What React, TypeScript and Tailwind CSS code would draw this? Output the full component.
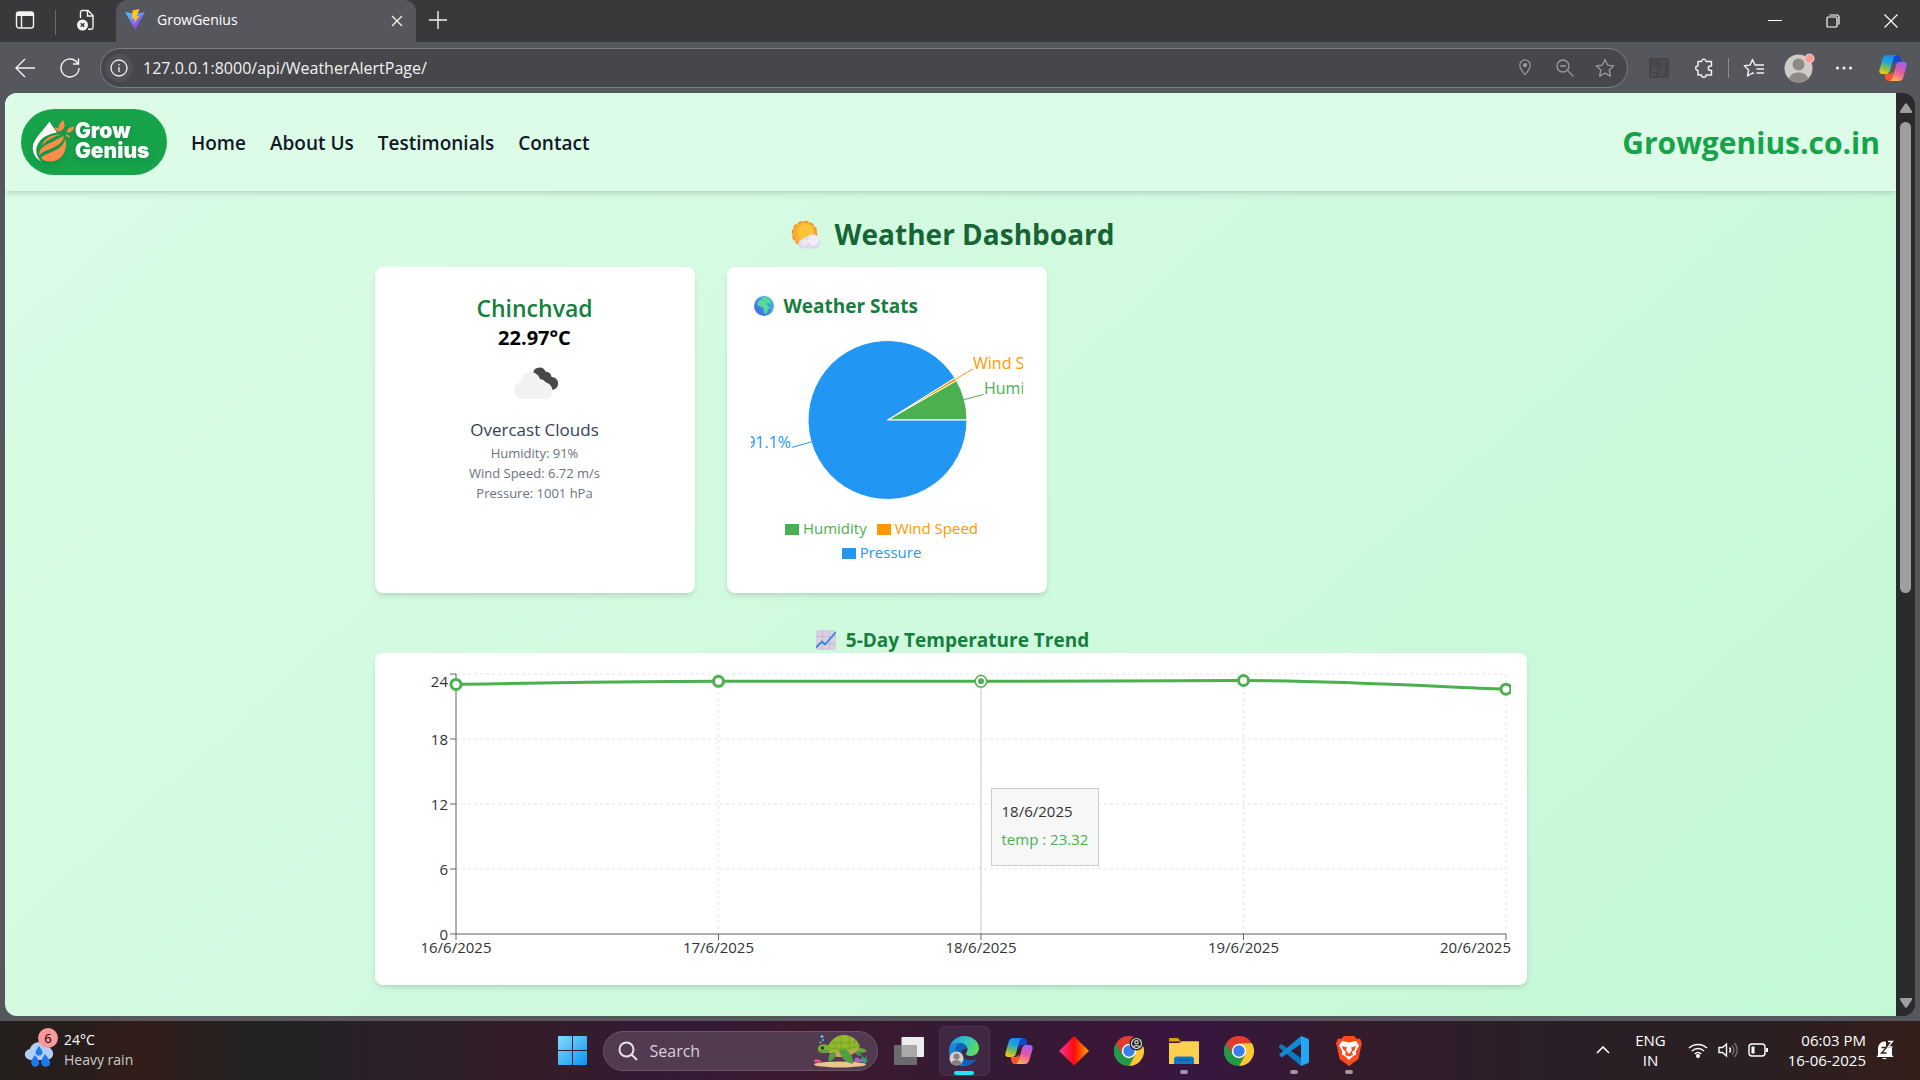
import React, { useId } from "react";
import type { ReactNode } from "react";

const days = [
  { date: "16/6/2025", temp: 23.04 },
  { date: "17/6/2025", temp: 23.32 },
  { date: "18/6/2025", temp: 23.32 },
  { date: "19/6/2025", temp: 23.4 },
  { date: "20/6/2025", temp: 22.6 },
];

/* ---------- shared pieces ---------- */

function IconButton({ label, className, children }: { label: string; className: string; children: ReactNode }) {
  return (
    <button type="button" aria-label={label} className={`flex shrink-0 items-center justify-center ${className}`}>
      {children}
    </button>
  );
}

function CopilotIcon() {
  const id = useId();
  return (
    <svg viewBox="0 0 28 28" className="size-7" aria-hidden="true">
      <defs>
        <linearGradient id={`${id}a`} x1="0.6" y1="0" x2="0.3" y2="1">
          <stop offset="0" stopColor="#1a8cf0" />
          <stop offset="0.4" stopColor="#22a5d8" />
          <stop offset="0.7" stopColor="#7fc04a" />
          <stop offset="1" stopColor="#f5c51a" />
        </linearGradient>
        <linearGradient id={`${id}b`} x1="0.7" y1="0" x2="0.3" y2="1">
          <stop offset="0" stopColor="#a55cf0" />
          <stop offset="0.5" stopColor="#ea5a9c" />
          <stop offset="1" stopColor="#fdb35a" />
        </linearGradient>
      </defs>
      <path d="M12 1h6.500c1.800 0 2.600 1.200 3 2.500l1.200 4.500h-4.500c-2 0-3 1-3.600 3z" fill="#1649c9" />
      <path d="M16 27H9.500c-1.700 0-2.500-1.200-3-2.800L5.500 20H10c2 0 3-1.200 3.600-3z" fill="#f4562f" />
      <path d="M8.500 1h9c-1.700.3-2.500 1.500-3 3.200L11 16.500C10.300 19 9.300 20 7 20H3C1 20 0 18.500.4 16.300L3.600 5C4.400 2.300 5.700 1 8.500 1z" fill={`url(#${id}a)`} />
      <path d="M19.500 27h-9c1.700-.3 2.500-1.500 3-3.200L17 11.500C17.700 9 18.700 8 21 8h4c2 0 3 1.500 2.600 3.700L24.400 23c-.8 2.700-2.100 4-4.900 4z" fill={`url(#${id}b)`} />
    </svg>
  );
}

function ChromeIcon({ profile = false }: { profile?: boolean }) {
  return (
    <svg viewBox="0 0 30 30" className="size-[30px]" aria-hidden="true">
      <path d="M15 15 2 7.500A15 15 0 0 1 28 7.500z" fill="#e33b2e" />
      <path d="M2 7.500A15 15 0 0 0 15 30l6.200-11.400L15 15 8.800 18.600z" fill="#229a49" />
      <path d="M28 7.500A15 15 0 0 1 15 30l6.300-11.400L15 8z" fill="#fcc934" />
      <path d="M15 7.500h13L21 15z" fill="#fcc934" />
      <path d="M2 7.500 8.800 19 15 15V7.500z" fill="#e33b2e" />
      <path d="M2 7.500 8.600 18.800A15 15 0 0 0 15 22l-4 7.500A15 15 0 0 1 2 7.500z" fill="#229a49" />
      <circle cx="15" cy="15" r="7.200" fill="#fff" />
      <circle cx="15" cy="15" r="5.700" fill="#3b7ded" />
      {profile && (
        <g>
          <circle cx="22.500" cy="7.500" r="7" fill="#222" />
          <circle cx="22.500" cy="7.500" r="5" fill="none" stroke="#d8d8d8" strokeWidth="1.200" />
          <circle cx="22.500" cy="6.300" r="1.700" fill="none" stroke="#d8d8d8" strokeWidth="1.200" />
          <path d="M19.500 11c.6-1.800 5.400-1.800 6 0" fill="none" stroke="#d8d8d8" strokeWidth="1.200" />
        </g>
      )}
    </svg>
  );
}

/* ---------- browser chrome ---------- */

function TabStrip() {
  return (
    <div className="flex h-[42px] shrink-0 bg-[#39393c] text-white">
      <div className="flex w-[116px] items-start">
        <IconButton label="Tab actions" className="ml-1 h-10 w-[42px]">
          <svg viewBox="0 0 20 20" className="size-5" fill="none" stroke="#f2f2f2" strokeWidth="1.400">
            <rect x="1.500" y="2" width="17" height="16" rx="2.500" />
            <path d="M2 4h16" strokeWidth="4" />
            <path d="M6.500 6v12" />
          </svg>
        </IconButton>
        <div className="mx-[9px] mt-2.5 h-[25px] w-px bg-[#6a6a6e]" />
        <IconButton label="Workspaces" className="h-10 w-[42px]">
          <svg viewBox="0 0 20 22" className="h-[22px] w-5" fill="none" stroke="#f2f2f2" strokeWidth="1.400">
            <path d="M4.500 9V3.200c0-1 .7-1.700 1.700-1.700H12l5 5v12c0 1-.7 1.700-1.700 1.700H12" />
            <path d="M11.500 1.500V7H17" />
            <circle cx="6.500" cy="16" r="5.500" fill="#f2f2f2" stroke="none" />
            <path d="m4.700 14.200 3.600 3.600m0-3.600-3.600 3.600" stroke="#39393c" />
          </svg>
        </IconButton>
      </div>
      <div className="flex w-[300px] items-center rounded-t-xl bg-[#56575c] pb-1 pl-2">
        <svg viewBox="0 0 22 22" className="size-[22px]" aria-hidden="true">
          <defs>
            <linearGradient id="vite" x1="0" y1="0" x2="0.6" y2="1">
              <stop offset="0" stopColor="#41d1ff" />
              <stop offset="1" stopColor="#a233f5" />
            </linearGradient>
          </defs>
          <path d="m1 4 10 17.500L21 4l-10 2z" fill="url(#vite)" />
          <path d="m15.500 1-7 1.400L8 11l3-.6L10.200 15l5.400-7.400-3 .6z" fill="#ffc81f" />
        </svg>
        <span className="ml-[11px] flex-1 font-[Open_Sans] text-[14px]">GrowGenius</span>
        <IconButton label="Close tab" className="h-8 w-[38px] pt-1">
          <svg viewBox="0 0 12 12" className="size-3" stroke="#f2f2f2" strokeWidth="1.400"><path d="m1 1 10 10M11 1 1 11" /></svg>
        </IconButton>
      </div>
      <IconButton label="New tab" className="h-10 w-11">
        <svg viewBox="0 0 18 18" className="size-[18px]" stroke="#f2f2f2" strokeWidth="1.400"><path d="M9 0v18M0 9h18" /></svg>
      </IconButton>
      <div className="flex-1" />
      <IconButton label="Minimize" className="h-[42px] w-[58px]">
        <svg viewBox="0 0 14 14" className="size-3.5" stroke="#fff"><path d="M0 6.500h14" /></svg>
      </IconButton>
      <IconButton label="Restore" className="h-[42px] w-[58px]">
        <svg viewBox="0 0 14 14" className="size-3.5" fill="none" stroke="#fff" strokeWidth="1.200">
          <rect x="1" y="3" width="10" height="10" rx="1" />
          <path d="M3.500 1H11c1.400 0 2 .6 2 2v7.500" />
        </svg>
      </IconButton>
      <IconButton label="Close" className="h-[42px] w-[58px]">
        <svg viewBox="0 0 14 14" className="size-3.5" stroke="#fff" strokeWidth="1.200"><path d="m.5.5 13 13M13.500.5l-13 13" /></svg>
      </IconButton>
    </div>
  );
}

const star = "m10 1.500 2.600 5.600 6.100.7-4.500 4.200 1.200 6.100L10 15l-5.400 3.100L5.800 12 1.300 7.800l6.100-.7z";

function Toolbar() {
  return (
    <div className="flex h-[51px] shrink-0 items-center bg-[#56575c]">
      <IconButton label="Back" className="h-10 w-[50px]">
        <svg viewBox="0 0 20 20" className="size-5" fill="none" stroke="#f4f4f4" strokeWidth="1.400"><path d="M20 10H1M10 1l-9 9 9 9" /></svg>
      </IconButton>
      <IconButton label="Refresh" className="h-10 w-10">
        <svg viewBox="0 0 20 20" className="size-5" fill="none" stroke="#f4f4f4" strokeWidth="1.400"><path d="M19 10a9 9 0 1 1-3.200-6.900L18.500 6M18.500.5V6H13" /></svg>
      </IconButton>
      <div className="ml-2.5 flex h-10 flex-1 items-center rounded-full border border-[#7d7e82] bg-[#46474b] pr-0.5">
        <IconButton label="Site information" className="ml-1 size-7 rounded-full bg-[#505155]">
          <svg viewBox="0 0 18 18" className="size-[18px]" fill="none" stroke="#f0f0f0" strokeWidth="1.300">
            <circle cx="9" cy="9" r="8" />
            <path d="M9 8v5M9 5v1.500" />
          </svg>
        </IconButton>
        <input
          aria-label="Address"
          className="ml-2.5 flex-1 bg-transparent font-[Open_Sans] text-[16px] text-[#f1f1f1] outline-none"
          defaultValue="127.0.0.1:8000/api/WeatherAlertPage/"
        />
        <IconButton label="Location" className="h-8 w-10">
          <svg viewBox="0 0 14 18" className="h-[17px] w-3.5" fill="none" stroke="#9b9b9e" strokeWidth="1.300">
            <path d="M7 16.500C3 12 1.500 9.500 1.500 6.500a5.500 5.500 0 0 1 11 0c0 3-1.500 5.500-5.500 10z" />
            <circle cx="7" cy="6.500" r="1.500" fill="#9b9b9e" />
          </svg>
        </IconButton>
        <IconButton label="Zoom" className="h-8 w-10">
          <svg viewBox="0 0 18 18" className="size-[18px]" fill="none" stroke="#9b9b9e" strokeWidth="1.300"><circle cx="7" cy="7" r="6" /><path d="m11.500 11.500 6 6M4 7h6" /></svg>
        </IconButton>
        <IconButton label="Add to favorites" className="h-8 w-10">
          <svg viewBox="0 0 20 20" className="size-5" fill="none" stroke="#9b9b9e" strokeWidth="1.300" strokeLinejoin="round"><path d={star} /></svg>
        </IconButton>
      </div>
      <IconButton label="Extension" className="ml-2 h-10 w-[45px]">
        <svg viewBox="0 0 20 20" className="size-5" fill="none" stroke="#5b5b5e">
          <rect width="20" height="20" rx="1" fill="#47474a" stroke="none" />
          <path d="M11 4h7M3 10h4v3H3v4h4M11 10h4v4h-4v3h4" />
        </svg>
      </IconButton>
      <IconButton label="Extensions" className="h-10 w-[45px]">
        <svg viewBox="0 0 20 20" className="size-5" fill="none" stroke="#f4f4f4" strokeWidth="1.400" strokeLinejoin="round">
          <path d="M4 3.500h3.500a2.300 2.300 0 1 1 4.600 0H17.500V8h-1a2.200 2.200 0 0 0 0 4.400h1V17H12.100a2.300 2.300 0 0 1-4.600 0H4v-4.500a2.300 2.300 0 0 1 0-4.600z" />
        </svg>
      </IconButton>
      <div className="mx-0.5 h-5 w-px bg-[#8b8b8e]" />
      <IconButton label="Favorites" className="h-10 w-[45px]">
        <svg viewBox="0 0 22 20" className="h-5 w-[22px]" fill="none" stroke="#f4f4f4" strokeWidth="1.400" strokeLinejoin="round">
          <path d="M11 15.500 9.500 15l-5 3 1.200-6L1.300 7.800l5.700-.7L9.500 1.500 12 7h9M13.500 11H21M13.500 15H21" />
        </svg>
      </IconButton>
      <IconButton label="Profile" className="h-10 w-[45px]">
        <svg viewBox="0 0 32 30" className="h-[30px] w-8">
          <circle cx="15.500" cy="15.500" r="14" fill="#cfccc9" />
          <circle cx="15.500" cy="11.500" r="6" fill="#8d8985" />
          <path d="M6 25.500c2-8 17-8 19 0a14 14 0 0 1-19 0z" fill="#8d8985" />
          <circle cx="26.500" cy="5.500" r="5" fill="#d8d5d3" />
          <circle cx="26.500" cy="5.500" r="4" fill="#fd9a98" />
        </svg>
      </IconButton>
      <IconButton label="Settings and more" className="h-10 w-[45px]">
        <svg viewBox="0 0 18 4" className="h-1 w-[18px]" fill="#f4f4f4"><circle cx="2.500" cy="2" r="1.500" /><circle cx="9" cy="2" r="1.500" /><circle cx="15.500" cy="2" r="1.500" /></svg>
      </IconButton>
      <IconButton label="Copilot" className="h-10 w-[54px]">
        <CopilotIcon />
      </IconButton>
    </div>
  );
}

/* ---------- page ---------- */

function Logo() {
  return (
    <a href="#home" aria-label="Grow Genius" className="flex h-[66px] w-[146px] items-center rounded-full bg-[#16a34a] pl-2.5 text-white">
      <svg viewBox="0 0 44 44" className="h-11 w-11 drop-shadow-md" aria-hidden="true">
        <path d="M18.500 1.500C14 8.500 6 15 2.500 23.500 0 31 4 38.500 10 41.500 5 36 3.500 29.500 7.500 23 12 16 20 13.500 26 12.500 23.500 9 20.500 5 18.500 1.500z" fill="#fff" />
        <path d="M30 14.500c-8-.5-17 3-19.500 11.500 5-5.500 11-9 19.500-11.500z" fill="#fd8c4b" />
        <path d="M32.500 15.500c1 5-3 8.500-9 11.500-7 3.500-12 4-15 8.500C7 27 17 24.500 24 20.500c3.500-2 7-3.500 8.500-5z" fill="#fd8c4b" />
        <path d="M34.500 19c2.500 11-3.500 22-14.500 22.500-5 .2-8.500-1.500-10-3.500 4-6 20-5 24.500-19z" fill="#fd8c4b" />
        <path d="M31 10.500C26.500 9.500 26 6 32 0c2 4 2.500 7.500-1 10.500zM36 12.500c-.5-3 2-5.500 7.500-6-1 4-3.500 6.500-7.500 6zM30 12c-3.500-.5-5.500-2-6.500-4.500 3.500 0 6 1.500 6.500 4.500zM34.500 14.500c1.500 0 3.500.5 4.500 3-2.500 0-4-1-4.500-3z" fill="#fd8c4b" />
      </svg>
      <span className="pb-0.5 font-[Inter] text-[21px] leading-5 font-black drop-shadow-md">
        Grow
        <br />
        Genius
      </span>
    </a>
  );
}

function SiteHeader() {
  return (
    <header className="relative flex items-center justify-between bg-[#dcfce7] p-4 shadow-md">
      <div className="flex items-center gap-6">
        <Logo />
        <nav className="flex gap-6 pt-0.5 text-[19px] leading-7 font-semibold text-[#111827]">
          <a href="#home">Home</a>
          <a href="#about">About Us</a>
          <a href="#testimonials">Testimonials</a>
          <a href="#contact">Contact</a>
        </nav>
      </div>
      <div className="pt-0.5 text-[30px] leading-9 font-bold text-[#16a34a]">Growgenius.co.in</div>
    </header>
  );
}

function SunCloud() {
  return (
    <svg viewBox="0 0 32 32" className="size-8" aria-hidden="true">
      <circle cx="13.500" cy="15.500" r="11.300" fill="none" stroke="#f58a2e" strokeWidth="3" strokeLinecap="round" strokeDasharray="2.500 3.420" />
      <circle cx="13.500" cy="15.500" r="11.300" fill="#fbb02f" />
      <circle cx="14.500" cy="14" r="8" fill="#fdc436" />
      <path d="M12 30.500a4.500 4.500 0 0 1 0-9.500 5.500 5.500 0 0 1 4-2.500 6 6 0 0 1 9.500.5c4 2 5 6.500 2.500 9.500-1 1.500-2.500 2-4 2z" fill="#dfd8ea" />
      <circle cx="22.500" cy="22" r="5.500" fill="#f0edf6" />
      <circle cx="13.500" cy="24.500" r="3.500" fill="#ebe6f2" />
    </svg>
  );
}

function Globe() {
  return (
    <svg viewBox="0 0 20 20" className="size-5" aria-hidden="true">
      <defs>
        <linearGradient id="sea" x1="1" y1="0" x2="0" y2="1">
          <stop offset="0" stopColor="#39b8f5" />
          <stop offset="1" stopColor="#4a62d8" />
        </linearGradient>
      </defs>
      <circle cx="10" cy="10" r="10" fill="url(#sea)" />
      <path d="M7 1.500C11 0 16 2 18 5.500l-2 1 1.500 2-1.500.5-1.500-2-2 .5 2 3h2l-2.500 3-1 3.500-2 1-1.500-3.500.5-2-2-1.500L4.500 10 3 8l2-3.500 3-1z" fill="#55d89a" />
      <path d="M17 12.500 18.500 11v2.500L17 15z" fill="#55d89a" />
    </svg>
  );
}

function TrendIcon() {
  return (
    <svg viewBox="0 0 20 20" className="size-5" aria-hidden="true">
      <rect width="20" height="20" rx="1.500" fill="#d9d0e3" />
      <path d="M0 6.500h20M0 13.500h20M6.500 0v20M13.500 0v20" stroke="#c6bbd3" />
      <path d="m0 17.500 6-6 3 3L20 2" fill="none" stroke="#2d86d8" strokeWidth="1.800" />
    </svg>
  );
}

function CurrentWeather() {
  return (
    <section className="w-80 rounded-lg bg-white p-6 text-center shadow-md">
      <h2 className="pt-0.5 text-[23px] leading-[30px] font-semibold text-[#15803d]">Chinchvad</h2>
      <p className="pt-0.5 text-[20px] leading-[26px] font-bold text-black">22.97°C</p>
      <svg viewBox="0 0 64 64" className="mx-auto size-16" aria-hidden="true">
        <path d="M30 23a6.500 6.500 0 0 1 12.500-2.500 6 6 0 0 1 6 5.500 6.500 6.500 0 1 1-5 10.500z" fill="#484848" />
        <path d="M17 48a9 9 0 0 1-1-16.500 9 9 0 0 1 1.500-.5 10 10 0 0 1 19.500-3 8 8 0 0 1 6 3.500c4 1 6.500 4.500 6.500 8.500s-3 8-7.500 8z" fill="#f2f2f2" />
      </svg>
      <p className="pt-0.5 text-[17px] leading-[26px] text-[#374151]">Overcast Clouds</p>
      <p className="text-[13px] leading-5 text-[#6b7280]">Humidity: 91%</p>
      <p className="text-[13px] leading-5 text-[#6b7280]">Wind Speed: 6.72 m/s</p>
      <p className="text-[13px] leading-5 text-[#6b7280]">Pressure: 1001 hPa</p>
    </section>
  );
}

const CX = 136.5;
const CY = 101;
const R = 79.5;

function polar(angle: number, radius: number) {
  const a = (angle * Math.PI) / 180;
  return `${(CX + radius * Math.cos(a)).toFixed(2)} ${(CY - radius * Math.sin(a)).toFixed(2)}`;
}

function slice(from: number, to: number) {
  return `M${CX} ${CY}L${polar(from, R)}A${R} ${R} 0 ${to - from > 180 ? 1 : 0} 0 ${polar(to, R)}Z`;
}

function WeatherStats() {
  return (
    <section className="w-80 rounded-lg bg-white p-6 shadow-md">
      <h2 className="flex items-center gap-2.5 pt-0.5 pl-[3px] text-[19px] leading-[26px] font-bold text-[#15803d]">
        <Globe />
        Weather Stats
      </h2>
      <div className="h-[250px]">
        <svg viewBox="0 0 272 197" className="h-[197px] w-full overflow-hidden" fontSize="16" role="img" aria-label="Weather stats">
          <g stroke="#fff">
            <path d={slice(0, 29.8)} fill="#4caf50" />
            <path d={slice(29.8, 32)} fill="#ff9800" />
            <path d={slice(32, 360)} fill="#2196f3" />
          </g>
          <path d={`M${polar(14.9, R)}L${polar(14.9, R + 20)}`} stroke="#4caf50" />
          <path d={`M${polar(30.9, R)}L${polar(30.9, R + 20)}`} stroke="#ff9800" />
          <path d={`M${polar(196, R)}L${polar(196, R + 20)}`} stroke="#2196f3" />
          <text x="233" y="75" fill="#4caf50">Humidity: 8.3%</text>
          <text x="222" y="50" fill="#ff9800">Wind Speed: 0.6%</text>
          <text x="40" y="129" fill="#2196f3" textAnchor="end">Pressure: 91.1%</text>
        </svg>
        <ul className="flex flex-wrap justify-center gap-x-2.5 pr-2.5 text-[15px] leading-6">
          <li className="flex items-center gap-1 text-[#4caf50]"><span className="mt-0.5 h-[11px] w-3.5 bg-[#4caf50]" />Humidity</li>
          <li className="flex items-center gap-1 text-[#ff9800]"><span className="mt-0.5 h-[11px] w-3.5 bg-[#ff9800]" />Wind Speed</li>
          <li className="flex items-center gap-1 text-[#2196f3]"><span className="mt-0.5 h-[11px] w-3.5 bg-[#2196f3]" />Pressure</li>
        </ul>
      </div>
    </section>
  );
}

const xOf = (i: number) => 65 + i * 262.5;
const yOf = (t: number) => 265 - (t / 24) * 260;

function TrendChart() {
  const pts = days.map((d, i) => [xOf(i), yOf(d.temp)]);
  const [a, b, c, d, e] = pts;
  const line = `M${a[0]} ${a[1]}C152.500 ${a[1] - 1.5} 240 ${b[1]} ${b[0]} ${b[1]}S502.500 ${c[1]} ${c[0]} ${c[1]}S765 ${d[1]} ${d[0]} ${d[1]}S1027.500 ${e[1] - 3.5} ${e[0]} ${e[1]}`;
  return (
    <div className="relative rounded-lg bg-white p-4 shadow-md">
      <svg viewBox="0 0 1120 300" className="w-full overflow-hidden" fontSize="15" fill="#333" role="img" aria-label="5-day temperature trend">
        <g stroke="#ccc" strokeDasharray="3 3" strokeOpacity="0.5">
          {[0, 6, 12, 18, 24].map((t) => <path key={t} d={`M65 ${yOf(t)}H1115`} />)}
          {days.map((day, i) => <path key={day.date} d={`M${xOf(i)} 5V265`} />)}
        </g>
        <path d="M590 5V265" stroke="#ccc" />
        <path d="M65 5V265H1115" fill="none" stroke="#666" />
        {[0, 6, 12, 18, 24].map((t) => (
          <g key={t}>
            <path d={`M59 ${yOf(t)}H65`} stroke="#666" />
            <text x="57" y={t === 24 ? 18 : yOf(t) + 6} textAnchor="end">{t}</text>
          </g>
        ))}
        {days.map((day, i) => (
          <g key={day.date}>
            <path d={`M${xOf(i)} 265V271`} stroke="#666" />
            <text x={i === 4 ? 1120 : xOf(i)} y="284" textAnchor={i === 4 ? "end" : "middle"}>{day.date}</text>
          </g>
        ))}
        <path d={line} fill="none" stroke="#4caf50" strokeWidth="3" />
        {pts.map(([x, y]) => <circle key={x} cx={x} cy={y} r="5" fill="#fff" stroke="#4caf50" strokeWidth="3" />)}
        <circle cx={c[0]} cy={c[1]} r="4" fill="#4caf50" stroke="#fff" strokeWidth="2" />
      </svg>
      <div className="absolute top-[135px] left-[616px] border border-[#ccc] bg-[#f7f7f7] p-2.5 text-[15px] leading-6 whitespace-nowrap text-[#333]">
        <p>18/6/2025</p>
        <p className="py-1 text-[#4caf50]">temp : 23.32</p>
      </div>
    </div>
  );
}

function Page() {
  return (
    <div className="min-w-0 flex-1 overflow-hidden rounded-l-xl bg-gradient-to-br from-[#dcfce7] to-[#bbf7d0] bg-[length:100%_1708px] font-[Open_Sans]">
      <SiteHeader />
      <main className="p-6">
        <div className="mx-auto max-w-6xl">
          <h1 className="mb-4 flex items-center justify-center gap-3 pt-0.5 pl-1 text-[28px] leading-[34px] font-bold text-[#166534]">
            <SunCloud />
            Weather Dashboard
          </h1>
          <div className="flex gap-8">
            <CurrentWeather />
            <WeatherStats />
          </div>
          <h2 className="mt-8 flex items-center justify-center gap-2.5 pt-0.5 pl-1 text-[19px] leading-[26px] font-bold text-[#15803d]">
            <TrendIcon />
            5-Day Temperature Trend
          </h2>
          <TrendChart />
        </div>
      </main>
    </div>
  );
}

function Scrollbar() {
  return (
    <div className="flex w-[19px] flex-col items-center rounded-r-xl bg-[#2b2b2c]" aria-hidden="true">
      <svg viewBox="0 0 12 10" className="mt-2.5 h-2.5 w-3" fill="#9f9f9f"><path d="M5 .8q1-1.300 2 0l5 7.500q.3 1.700-1.200 1.700H1.200Q-.3 10 0 8.300z" /></svg>
      <div className="mt-[9px] h-[51%] w-[11px] rounded-full bg-[#9f9f9f]" />
      <svg viewBox="0 0 12 10" className="mt-auto mb-2 h-2.5 w-3" fill="#9f9f9f"><path d="M5 9.200q1 1.300 2 0l5-7.500Q12.300 0 10.800 0H1.200Q-.3 0 0 1.700z" /></svg>
    </div>
  );
}

/* ---------- taskbar ---------- */

function Turtle() {
  return (
    <svg viewBox="0 0 56 34" className="h-[34px] w-14" aria-hidden="true">
      <ellipse cx="27" cy="30.500" rx="26" ry="3" fill="#e9c78c" />
      <path d="M42 14c4 0 8-1 12 3-3 2-8 2-12 0z" fill="#63a83a" />
      <path d="M43 17c3 1 5 3 6 5-3 0-6-1-8-4z" fill="#4f9440" />
      <path d="M14 15c8 3 22 3 32-1-4 7-12 9-20 9-6 0-10-3-12-8z" fill="#d99a5c" />
      <path d="M14 14C18 5 24 1 31 1c8 0 14 5 16 12-6 4-14 5-21 5-5 0-10-1-12-4z" fill="#93b92d" />
      <path d="M15 13c8 3 22 3 31-2M20 7l4 8M27 2l2 14M36 2l1 13M42 6l-1 8M19 8c8 2 16 1 24-1" stroke="#6f9726" strokeWidth=".7" fill="none" />
      <path d="M5 14c1-5 10-5 13 0 1 3-2 5-6 5-4 .5-8-1-7-5z" fill="#7eae3a" />
      <path d="M6 17c3 1 6 1 9-1" stroke="#4d7f22" fill="none" strokeWidth=".8" />
      <circle cx="9.500" cy="14" r="1.700" fill="#1f3a1a" />
      <path d="M26 16c1 5 4 12 14 14 1-5-2-12-8-15zM19 18c-4 3-4 7-3 10 4-2 7-5 7-9z" fill="#4fa045" />
      <circle cx="9" cy="2.500" r="1.500" fill="#5cc3e8" /><circle cx="10" cy="6" r="1" fill="#5cc3e8" /><circle cx="7.500" cy="8.500" r="1" fill="#5cc3e8" />
      <path d="M1 28c0-3 3-4 4-2 2-1 4 1 3 3z" fill="#ee4f8a" />
      <path d="M41 28c0-4 3-6 5-3 3-1 4 1 3 3z" fill="#a760c8" />
      <path d="M49 28c-1-3 0-5 0-7l2 4 3-4-1 5 2-1-2 4z" fill="#35a37b" />
    </svg>
  );
}

function TaskIcon({ label, open = false, children }: { label: string; open?: boolean; children: ReactNode }) {
  return (
    <button type="button" aria-label={label} className="relative flex h-[50px] w-[55px] items-center justify-center">
      {children}
      {open && <span className="absolute bottom-0.5 h-1 w-2 rounded-full bg-[#a395a6]" />}
    </button>
  );
}

function Taskbar() {
  return (
    <footer className="grid h-[59px] shrink-0 grid-cols-[1fr_auto_1fr] items-center bg-[linear-gradient(90deg,#241f1e_0%,#271e1c_4%,#321d19_7%,#222324_14%,#2a2029_20%,#341d29_28%,#331b36_34%,#3d1930_43%,#331b33_51%,#3b1639_58%,#381640_62%,#331b2c_70%,#2b1f28_80%,#2a1f22_91%,#351e1a_100%)] font-[Open_Sans] text-white">
      <button type="button" className="flex items-center pb-0.5 pl-6 text-left text-[14px] leading-5">
        <span className="relative mr-2 flex h-10 w-8 items-end">
          <svg viewBox="0 0 32 32" className="size-8" aria-hidden="true">
            <path d="M7 22C-1 21-1 12 6 11 8 3 19 2 22 9c9 0 10 13 0 13z" fill="#b3cdf6" />
            <path d="M15 8c-3 4-4 6-3 8s5 2 6 0 0-4-3-8zM11 17c-3 4-5 7-3 10s6 2 7-1-1-5-4-9zM21 16c-3 4-5 8-3 11s7 2 8-1-2-6-5-10z" fill="#1e78ee" />
          </svg>
          <span className="absolute -top-0.5 left-3.5 flex size-5 items-center justify-center rounded-full bg-[#fd969d] text-[13px] text-black">6</span>
        </span>
        <span>
          24°C
          <br />
          <span className="text-[#cfcaca]">Heavy rain</span>
        </span>
      </button>
      <div className="flex items-center pl-3.5">
        <button type="button" aria-label="Start" className="mr-4">
          <svg viewBox="0 0 29 29" className="size-[29px]">
            <defs>
              <linearGradient id="win" x1="0" y1="0" x2="1" y2="1">
                <stop offset="0" stopColor="#83dcfb" />
                <stop offset="1" stopColor="#0a93f3" />
              </linearGradient>
            </defs>
            <path d="M1 0h13v14H0V1a1 1 0 0 1 1-1zM15 0h13a1 1 0 0 1 1 1v13H15zM0 15h14v14H1a1 1 0 0 1-1-1zM15 15h14v13a1 1 0 0 1-1 1H15z" fill="url(#win)" />
          </svg>
        </button>
        <div className="flex h-10 w-[275px] items-center rounded-full border border-[#6d5568] bg-[#523a50] pr-2 pl-3.5">
          <svg viewBox="0 0 20 20" className="size-5" fill="none" stroke="#e8e2e7" strokeWidth="2"><circle cx="8.500" cy="8.500" r="7" /><path d="m13.500 13.500 5.500 5.500" /></svg>
          <input aria-label="Search" placeholder="Search" className="ml-3 w-0 flex-1 bg-transparent text-[16px] placeholder-[#d9d0d8] outline-none" />
          <Turtle />
        </div>
        <div className="ml-1 flex">
          <TaskIcon label="Task view">
            <svg viewBox="0 0 30 28" className="h-7 w-[30px]"><rect x="7.500" width="22.500" height="20" rx="1" fill="#ededed" /><rect y="8" width="23" height="20" rx="1" fill="#6b6b6b" /><rect x="7.500" y="8" width="15.500" height="12" fill="#a9a9a9" /></svg>
          </TaskIcon>
          <button type="button" aria-label="Edge" className="relative mx-[2px] flex h-[50px] w-[51px] items-center justify-center rounded-md border border-[#4c344e] bg-[#402743]">
            <svg viewBox="0 0 30 30" className="size-[30px]">
              <defs>
                <linearGradient id="edgeTop" x1="0" y1="0.3" x2="1" y2="0.6">
                  <stop offset="0" stopColor="#1f9fe0" />
                  <stop offset="0.5" stopColor="#2fc3c7" />
                  <stop offset="1" stopColor="#63df4f" />
                </linearGradient>
              </defs>
              <path d="M0 14C1 5 8 0 15 0c9 0 15 6 15 12 0 5-4 8-8.500 8-3.500 0-4.500-1.300-4.500-2.500s1.500-1.500 1.500-4C18.500 10 15 7 10 7 5 7 1 10 0 14z" fill="url(#edgeTop)" />
              <path d="M0 15c0-6 6-9 11-8 5 .5 8 4 7.500 6.500-1.500-2-5-1-6 2.500-1.500 5 4 9 11 8 1.500-.2 3-.8 4-1C25 27 20.500 30 15.500 30 6 30 0 23 0 15z" fill="#0f62b8" />
              <path d="M0 15c0-6 6-9 11-8-4.500 2-6 7-4.500 12.500 1.500 5 5 9 10 10.500C6 30 0 23 0 15z" fill="#1a86d8" />
              <circle cx="7.500" cy="22.500" r="7" fill="#d3d0cd" /><circle cx="7.500" cy="20.500" r="3" fill="#85817d" /><path d="M2.500 27c1-4 9-4 10 0-2 3-8 3-10 0z" fill="#85817d" />
            </svg>
            <span className="absolute bottom-0 h-1 w-5 rounded-full bg-[#1fe6fa]" />
          </button>
          <TaskIcon label="Copilot"><CopilotIcon /></TaskIcon>
          <TaskIcon label="Diamond">
            <svg viewBox="0 0 30 30" className="size-[30px]">
              <defs>
                <linearGradient id="dia"><stop offset="0" stopColor="#f4369b" /><stop offset="0.49" stopColor="#fb0a12" /><stop offset="0.6" stopColor="#ff2a00" /><stop offset="1" stopColor="#f7a800" /></linearGradient>
              </defs>
              <path d="m15 0 15 15-15 14.500L0 15z" fill="url(#dia)" />
            </svg>
          </TaskIcon>
          <TaskIcon label="Chrome profile"><ChromeIcon profile /></TaskIcon>
          <TaskIcon label="File Explorer" open>
            <svg viewBox="0 0 30 26" className="h-[26px] w-[30px]"><path d="M0 1a1 1 0 0 1 1-1h8l3 3.500H0z" fill="#e1a100" /><path d="M0 5h10l3-1.800h16a1 1 0 0 1 1 1V26H0z" fill="#fcd04f" /><path d="M5 26v-4.500a3 3 0 0 1 3-3h14a3 3 0 0 1 3 3V26z" fill="#0f78c8" /><path d="M9 22h12" stroke="#084d88" /></svg>
          </TaskIcon>
          <TaskIcon label="Chrome"><ChromeIcon /></TaskIcon>
          <TaskIcon label="Visual Studio Code" open>
            <svg viewBox="0 0 30 30" className="size-[30px]"><path d="M0 10 2.500 8 22 22v8L0 11.500z" fill="#0d79bf" /><path d="M22 0 0 18.500l2.500 3L22 8z" fill="#1389d2" /><path d="m22 0 6.500 2.500A2 2 0 0 1 30 4.500v21a2 2 0 0 1-1.500 2L22 30z" fill="#25a6f0" /></svg>
          </TaskIcon>
          <TaskIcon label="Brave" open>
            <svg viewBox="0 0 26 30" className="h-[30px] w-[26px]">
              <path d="M8 0h10l3 3 3-.5 2 5-1 3-2.500 12.500L13 30l-9.500-7L1 10.500l-1-3 2-5L5 3z" fill="#fb4a1c" />
              <path d="m6 5 7 1.500L20 5l3 4.500-3 5.500v3.500l-3.500 2L13 24l-3.500-3.500-3.500-2V15L3 9.500z" fill="#fff" />
              <path d="m6 10 5 1.500L10 14l3 4 3-4-1-2.500 5-1.500-1.500 4L16 16l1 3-4 1.500L9 19l1-3-2.500-2z" fill="#fb4a1c" />
              <path d="m12 12 1 5.500 1-5.500z" fill="#fff" />
            </svg>
          </TaskIcon>
        </div>
      </div>
      <div className="flex items-center justify-end pr-[26px] pb-0.5 text-[15px] leading-5">
        <IconButton label="Show hidden icons" className="mr-6 h-8 w-4">
          <svg viewBox="0 0 14 8" className="h-2 w-3.5" fill="none" stroke="#fff" strokeWidth="1.600"><path d="m1 7 6-6 6 6" /></svg>
        </IconButton>
        <button type="button" className="mr-[22px] text-center">ENG<br />IN</button>
        <svg viewBox="0 0 20 16" className="mr-2.5 h-4 w-5" fill="none" stroke="#fff" strokeWidth="1.500" aria-label="Wi-Fi"><path d="M1 6a13 13 0 0 1 18 0M4 9a8.500 8.500 0 0 1 12 0M6.700 12a5 5 0 0 1 6.600 0" /><circle cx="10" cy="14" r="1.300" fill="#fff" /></svg>
        <svg viewBox="0 0 20 18" className="mr-2.5 h-[18px] w-5" fill="none" stroke="#fff" strokeWidth="1.400" aria-label="Volume"><path d="M1 6.500h3.500L8.500 3v12l-4-3.500H1z" /><path d="M11.500 6.500q2 2.500 0 5" /><path d="M14 4.500q4 4.500 0 9M16.500 2q5.500 7 0 14" stroke="#7a6f72" /></svg>
        <svg viewBox="0 0 20 14" className="mr-5 h-3.5 w-5" fill="none" stroke="#fff" strokeWidth="1.400" aria-label="Battery"><rect x="1" y="1" width="16" height="12" rx="3" /><path d="M19 5v4" strokeWidth="2" /><rect x="3.500" y="3.500" width="3" height="7" fill="#fff" stroke="none" /></svg>
        <button type="button" className="mr-2.5 text-right">06:03 PM<br />16-06-2025</button>
        <svg viewBox="0 0 18 20" className="h-5 w-[18px]" aria-label="Notifications"><path d="M2 15V8a6.500 6.500 0 0 1 8-6.300V8h6v7l1.500 2H.5z" fill="#fff" /><path d="M6 18h5q-2.500 2.500-5 0z" fill="#fff" /><path d="M5.500 7.500h5l-5 5.500h5" fill="none" stroke="#2f1e1f" strokeWidth="1.300" /><path d="M12 1.500h4.500L12 7h4.500" fill="none" stroke="#fff" strokeWidth="1.300" /></svg>
      </div>
    </footer>
  );
}

export default function App() {
  return (
    <div className="flex h-screen flex-col overflow-hidden bg-[#56575c]">
      <TabStrip />
      <Toolbar />
      <div className="flex min-h-0 flex-1 px-[5px] pb-[5px]">
        <Page />
        <Scrollbar />
      </div>
      <Taskbar />
    </div>
  );
}
